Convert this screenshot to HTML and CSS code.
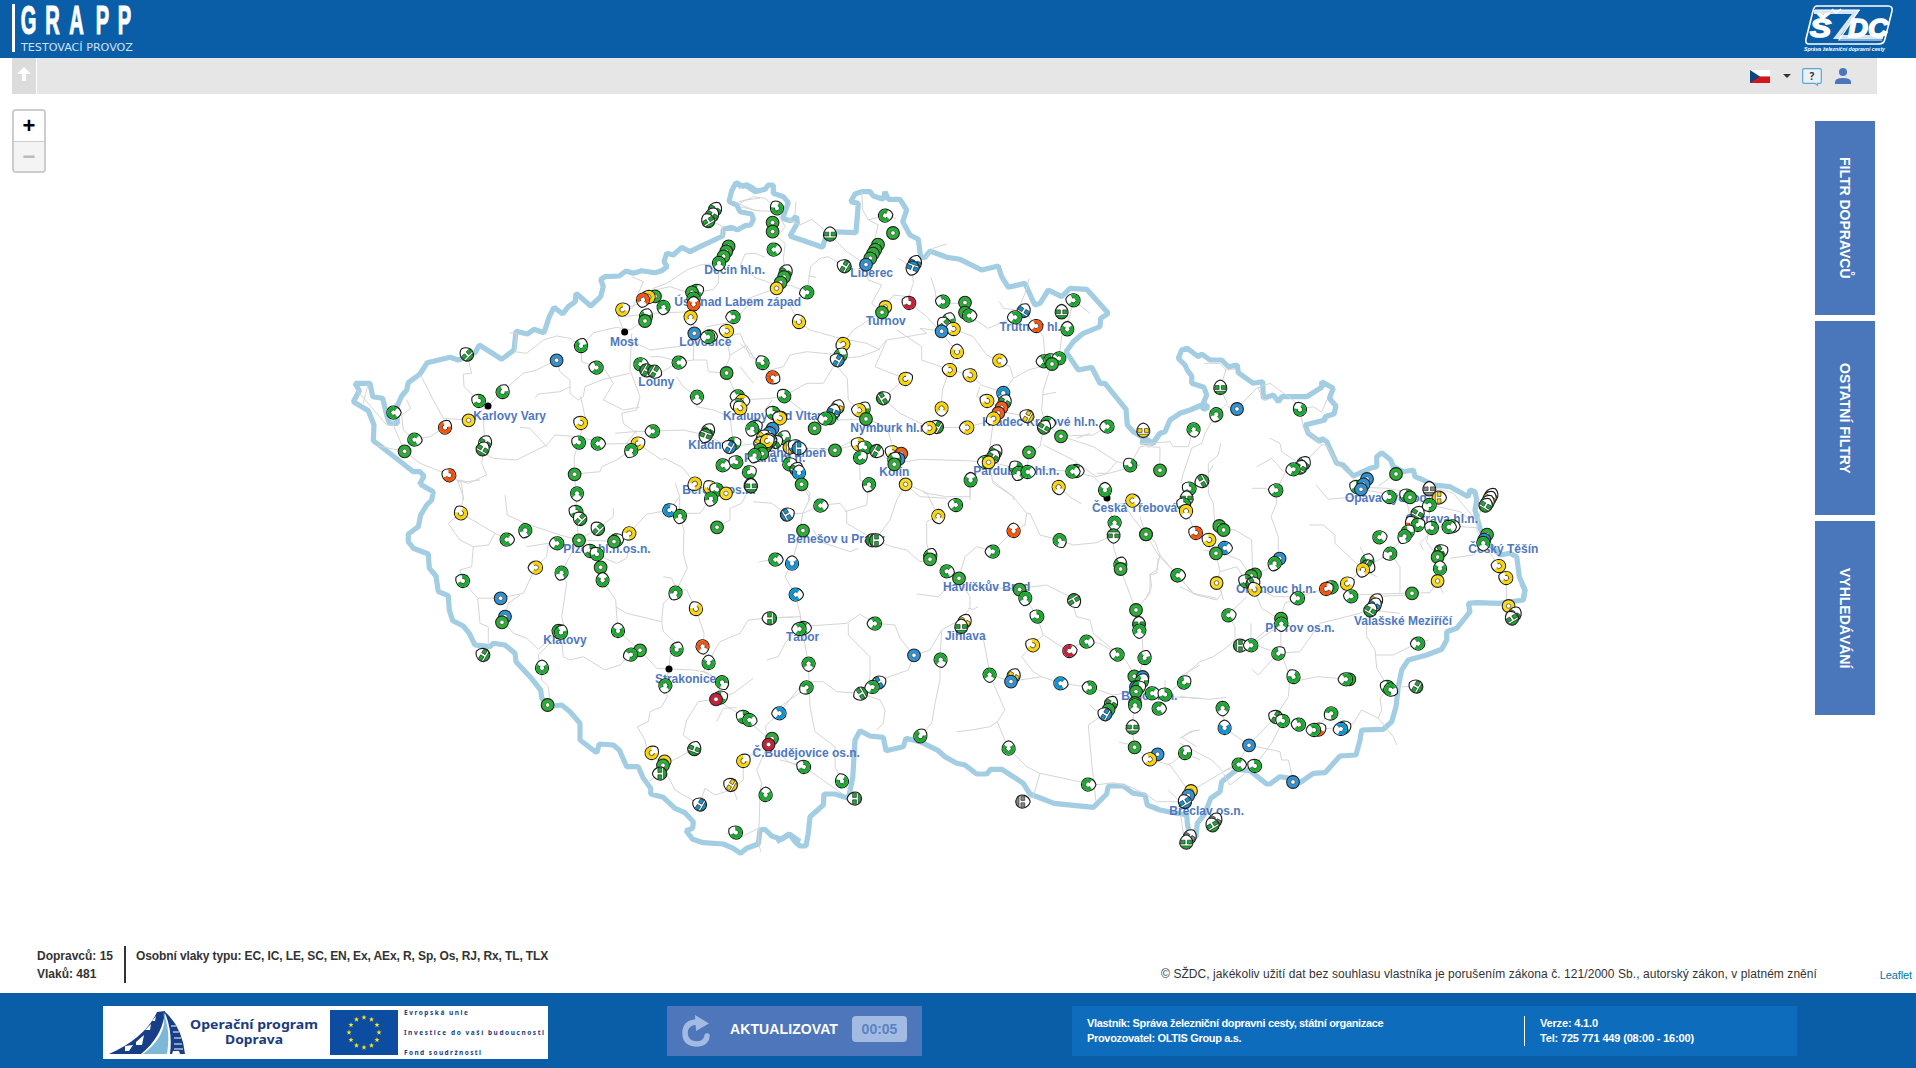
FILE: index.html
```html
<!DOCTYPE html>
<html lang="cs">
<head>
<meta charset="utf-8">
<title>GRAPP</title>
<link rel="stylesheet" href="styles.css">
</head>
<body>
<header class="header">
  <div class="brand">
    <svg class="brand-name" width="124" height="48" viewBox="0 0 124 48">
      <text class="brand-title" transform="translate(0 30) scale(.49 1)" x="18 68 117 171 216">GRAPP</text>
      <text class="brand-sub" x="9" y="47" textLength="112" lengthAdjust="spacingAndGlyphs">TESTOVACÍ PROVOZ</text>
    </svg>
  </div>
  <svg class="szdc" width="92" height="50" viewBox="0 0 92 50">
    <path class="szdc-frame" d="M14 2H85Q90 2 89 7L82 35Q81 40 76 40H6Q2 40 3 35L10 7Q11 2 14 2Z"/>
    <path class="szdc-band" d="M11 8H53L34 33H80"/>
    <path class="szdc-line" d="M12 6H56L36 36H79"/>
    <text class="szdc-text" x="7" y="33" textLength="21" lengthAdjust="spacingAndGlyphs">Š</text>
    <text class="szdc-text" x="45" y="33" textLength="40" lengthAdjust="spacingAndGlyphs">DC</text>
    <path class="szdc-line" d="M29 5l4 4 5-4"/>
    <text class="szdc-sub" x="1" y="47" textLength="81" lengthAdjust="spacingAndGlyphs">Správa železniční dopravní cesty</text>
  </svg>
</header>
<main class="main">
  <svg class="map" id="map" viewBox="0 58 1916 935"></svg>
  <div class="toolbar">
    <div class="collapse"><svg width="14" height="14" viewBox="0 0 14 14"><path d="M7 0L14 7H9V14H5V7H0Z" fill="#fff"/></svg></div>
    <div class="tools">
      <svg width="20" height="13" viewBox="0 0 20 13"><path fill="#fff" d="M0 0h20v6H0z"/><path fill="#d7141a" d="M0 6.500h20V13H0z"/><path fill="#11457e" d="M0 0l10 6.500L0 13z"/></svg>
      <svg class="caret" width="8" height="4" viewBox="0 0 8 4"><path fill="#333" d="M0 0h8L4 4z"/></svg>
      <svg class="help" width="20" height="18" viewBox="0 0 20 18"><path fill="#e9f1f6" stroke="#5ba5d8" stroke-width="1.200" d="M2 .7H18Q19.300.7 19.300 2V14Q19.300 15.300 18 15.300H15.500V17.300L13 15.300H2Q.7 15.300.7 14V2Q.7.7 2 .7Z"/><text class="help-text" x="10" y="11.500">?</text></svg>
      <svg class="user" width="16" height="16" viewBox="0 0 16 16"><g fill="#4a76bc"><circle cx="8" cy="4" r="4"/><path d="M0 16V14Q0 10 8 10T16 14V16Z"/></g></svg>
    </div>
  </div>
  <div class="stage">
    <div class="zoom"><span class="zoom-btn">+</span><span class="zoom-btn zoom-off">−</span></div>
    <nav class="tabs">
      <div class="tab"><span>FILTR DOPRAVCŮ</span></div>
      <div class="tab"><span>OSTATNÍ FILTRY</span></div>
      <div class="tab"><span>VYHLEDÁVÁNÍ</span></div>
    </nav>
  </div>
  <div class="status">
    <div class="counts"><div>Dopravců: 15</div><div>Vlaků: 481</div></div>
    <div class="types">Osobní vlaky typu: EC, IC, LE, SC, EN, Ex, AEx, R, Sp, Os, RJ, Rx, TL, TLX</div>
    <div class="copy">© SŽDC, jakékoliv užití dat bez souhlasu vlastníka je porušením zákona č. 121/2000 Sb., autorský zákon, v platném znění</div>
    <div class="leaflet">Leaflet</div>
  </div>
</main>
<footer class="footer">
  <svg class="fund" width="445" height="53" viewBox="0 0 445 53">
    <path fill="#fff" d="M0 0h445v53H0z"/>
    <path fill="#173f87" d="M6 48Q42 32 54 6L62 5Q60 30 38 48Z"/>
    <path fill="#fff" d="M22 40l8-1-4 6h-4zM33 36l8-7-2 10h-6zM42 24l6-6-1 6zM49 15l4-5-1 5z"/>
    <path fill="#7db8d6" d="M40 48Q66 28 60 6Q68 24 64 48Z"/>
    <path fill="#173f87" d="M61 5Q79 20 82 48H77L76 45H70L69 48H67Q70 24 61 5Z"/>
    <path stroke="#fff" stroke-width="1.200" d="M68 20h5M70 26h6M71 32h7M71 38h8M71 43h9"/>
    <g class="fund-name"><text x="87" y="23" textLength="128" lengthAdjust="spacingAndGlyphs">Operační program</text><text x="122" y="38" textLength="58" lengthAdjust="spacingAndGlyphs">Doprava</text></g>
    <path fill="#0c4da2" d="M227 4h68v45h-68z"/>
    <g id="stars" fill="#ffe617"></g>
    <g class="fund-small"><text x="301" y="9" textLength="64">Evropská unie</text><text x="301" y="28.500" textLength="140">Investice do vaší budoucnosti</text><text x="301" y="48.500" textLength="77">Fond soudržnosti</text></g>
  </svg>
  <div class="refresh">
    <svg width="28" height="32" viewBox="0 0 28 32"><path d="M14 7Q3 8 3 18T14 29Q24 29 25 21" fill="none" stroke="#a3bbe2" stroke-width="5.500" stroke-linecap="round"/><path fill="#a3bbe2" d="M13 0L27 8.500L14 16Z"/></svg>
    <span class="refresh-label">AKTUALIZOVAT</span>
    <span class="refresh-time">00:05</span>
  </div>
  <div class="info">
    <div class="info-main"><div>Vlastník: Správa železniční dopravni cesty, státní organizace</div><div>Provozovatel: OLTIS Group a.s.</div></div>
    <div class="info-side"><div>Verze: 4.1.0</div><div>Tel: 725 771 449 (08:00 - 16:00)</div></div>
  </div>
</footer>
<script src="map.js"></script>
</body>
</html>
```
FILE: styles.css
```css
* { box-sizing: border-box; }
body { margin: 0; width: 1916px; height: 1068px; display: flex; flex-direction: column; overflow: hidden; background: #fff; font-family: "Liberation Sans", Arial, sans-serif; }
svg { display: block; flex: none; overflow: visible; }

.header { height: 58px; flex: none; background: #0a5ea8; display: flex; justify-content: space-between; padding: 4px 21px 0 12px; }
.brand { height: 48px; border-left: 3px solid #fff; }
.brand-name { margin-left: -3px; }
.brand-title { font-size: 41px; font-weight: 700; fill: #fff; stroke: #fff; stroke-width: 1.200; }
.brand-sub { font: 11px "DejaVu Sans", sans-serif; fill: #cfe0f0; }
.szdc-frame { fill: none; stroke: #fff; stroke-width: 1.600; }
.szdc-band { fill: none; stroke: #d8e4ef; stroke-width: 4; }
.szdc-line { fill: none; stroke: #fff; stroke-width: 1.200; }
.szdc-text { font-size: 25px; font-weight: 700; font-style: italic; fill: #fff; stroke: #fff; stroke-width: 1.500; }
.szdc-sub { font-size: 6px; font-weight: 700; font-style: italic; fill: #fff; }

.main { position: relative; flex: 1; display: flex; flex-direction: column; }
.map { position: absolute; inset: 0; width: 1916px; height: 935px; }
.toolbar { position: relative; flex: none; width: 1865px; height: 36px; margin-left: 12px; background: #e6e6e6; display: flex; justify-content: space-between; }
.collapse { width: 25px; background: #dcdcdc; border-right: 1px solid #fff; padding: 9px 0 0 5px; }
.tools { display: flex; padding: 10px 26px 0 0; }
.tools > svg:first-child { margin-top: 2px; }
.caret { margin: 6px 11px 0 13px; }
.help-text { font: 700 10px "Noto Sans", sans-serif; fill: #333; text-anchor: middle; }
.user { margin-left: 13px; }

.stage { position: relative; flex: 1; display: flex; justify-content: space-between; align-items: flex-start; padding: 15px 41px 0 12px; }
.zoom { width: 34px; border: 2px solid #ccc; border-radius: 4px; overflow: hidden; }
.zoom-btn { display: block; height: 30px; background: #fff; font: 700 22px/30px "Liberation Sans", sans-serif; text-align: center; color: #000; }
.zoom-off { border-top: 1px solid #ccc; background: #f4f4f4; color: #bbb; }
.tabs { display: flex; flex-direction: column; gap: 6px; padding-top: 12px; }
.tab { width: 60px; height: 194px; background: #4a76bc; display: flex; align-items: center; justify-content: center; }
.tab span { writing-mode: vertical-rl; color: #fff; font-size: 14px; font-weight: 700; }

.status { position: relative; height: 47px; flex: none; display: flex; color: #333; font-size: 12px; line-height: 18px; }
.counts { width: 126px; height: 37px; padding: 1px 0 0 37px; border-right: 2px solid #333; font-weight: 700; white-space: nowrap; }
.types { padding: 1px 0 0 10px; font-weight: 700; letter-spacing: -.11px; }
.copy { margin: 19px 0 0 auto; letter-spacing: .062px; }
.leaflet { width: 99px; padding: 20px 4px 0 0; text-align: right; font-size: 11px; letter-spacing: -.1px; color: #0078a8; }

.footer { height: 75px; flex: none; background: #0a5ea8; display: flex; align-items: flex-start; padding: 13px 0 0 103px; }
.fund-name { font: 700 12.500px "Noto Sans", sans-serif; fill: #1b3b80; }
.fund-small { font: 700 6.500px "Noto Sans", sans-serif; fill: #1b3b80; }
.refresh { width: 255px; height: 50px; margin-left: 119px; background: #4d76bb; display: flex; align-items: center; padding: 0 0 4px 15px; }
.refresh svg { margin-top: 4px; }
.refresh-label { width: 108px; margin-left: 20px; color: #fff; font-size: 14px; font-weight: 700; white-space: nowrap; letter-spacing: .1px; }
.refresh-time { width: 55px; height: 26px; margin-left: 14px; border-radius: 4px; background: #a3bbe2; color: #5a82c4; font: 700 14px/26px "Liberation Sans", sans-serif; text-align: center; }
.info { width: 725px; height: 50px; margin-left: 150px; background: #0e6cbd; display: flex; padding: 10px 0 0 15px; color: #fff; font-size: 11px; font-weight: 700; line-height: 15px; }
.info-main { width: 438px; height: 30px; border-right: 1px solid #fff; letter-spacing: -.33px; }
.info-side { padding-left: 15px; letter-spacing: -.17px; }

.border { fill: none; stroke: #a2cde2; stroke-width: 5.200; stroke-linejoin: bevel; }
.rail { fill: none; stroke: #d5d5d5; stroke-width: 1; }
.city { font-size: 12px; font-weight: 700; fill: #4f78c0; }
.drop { fill: #fff; stroke: #1a1a1a; stroke-width: 3.200; }
.body { stroke: #222; stroke-width: 3; }
.hub { fill: #fff; stroke: #444; stroke-width: 2; }
.arc { fill: none; stroke-width: 10; }
.arc-in { fill: none; stroke: #1a1a1a; stroke-width: 2; }
.bars { stroke: #222; stroke-width: 1.800; }
.g { fill: #2bb035; } .y { fill: #fbdb20; } .b { fill: #2f94d5; } .o { fill: #f95c1c; } .r { fill: #cd2038; } .k { fill: #888; }
.bars.g { fill: #16ae2e; } .bars.y { fill: #fbd500; } .bars.b { fill: #0a98dc; }
.arc.g { stroke: #16ae2e; fill: none; } .arc.y { stroke: #fbd500; fill: none; } .arc.b { stroke: #0a98dc; fill: none; } .arc.o { stroke: #fb5406; fill: none; } .arc.r { stroke: #cd2038; fill: none; }
```
FILE: map.js
```js
// The network is stored in six tiles; coordinates inside a tile are in thirds
// of a pixel from its origin. Markers: kind (s stop, c moving, h halted) + colour, x, y, heading.
const tiles = [
{ x: 340, y: 170,
  border: "1260,62 1248,62 1235,52 1220,44 1208,48 1188,38 1175,62 1167,95 1190,105 1200,125 1235,132 1240,148 1232,165 1215,167 1192,180 1175,172 1150,178 1148,198 1080,230 1050,245 1025,232 1000,255 980,250 972,275 982,290 965,302 945,308 905,302 880,310 858,303 838,318 795,320 782,328 790,350 782,380 752,408 708,370 706,395 685,410 668,432 642,412 628,440 612,488 582,478 562,492 528,484 522,540 485,568 450,545 418,525 405,548 378,562 355,570 330,562 262,578 240,612 205,638 200,660 185,678 170,712 172,760 148,760 140,735 128,685 98,680 90,640 45,640 58,662 40,695 85,722 102,765 100,812 130,835 220,905 240,905 252,918 238,945",
  rails: ["1148,198 1148,170 1110,150","1260,85 1215,90 1190,98 1240,120 1260,122","1136,280 1080,285 1040,300 980,340 940,355 900,400 870,410","875,320 910,335 895,370 880,410 835,440 850,480","1136,280 1135,340 1120,358 1060,370 1060,440 1062,489","850,440 940,430 1050,425 1060,440","725,530 760,488 830,472 870,480 900,460 917,440","944,360 990,350 1050,370","875,490 870,600 900,680 890,720 845,730 850,760 890,790","868,510 930,540 1010,530 1065,520 1100,470 1180,455 1220,410 1260,390","1062,489 1060,570 1100,570 1105,605 1150,608 1170,560 1160,500 1200,490 1230,560 1250,570","1060,570 1015,577 960,610 900,580","1170,555 1220,525 1240,560","722,527 725,575 795,600 820,640 790,690 850,720 898,712","649,570 660,605 690,630 690,670 715,690 730,680 735,650 790,628 870,610","510,488 530,490 525,545 560,550 610,510 650,498 690,505 722,527","649,570 590,600 550,610 487,665 444,708 385,750 310,745 280,690 240,612","385,570 395,610 370,612 372,650 416,692 444,708","585,685 595,672 660,665 690,650","314,772 270,800 222,808 193,843 160,765 165,700","50,660 140,765 160,765","70,700 85,640","200,690 212,715 185,735 190,780 222,808","193,843 110,828","193,843 240,880 327,915 365,940 370,990","430,740 434,818 425,880 440,915 385,940 350,930","430,850 460,865 530,870 560,855 620,825 645,795 716,800 800,822 892,820 965,870 975,865 1030,895 1064,940","540,772 570,775 620,830","722,680 735,740 716,817 703,860 703,912 710,990","703,912 780,905 785,890 830,870 873,840","938,783 1030,780 1096,795 1170,830 1250,820","890,780 860,820","1070,679 1070,710 1120,720 1170,740 1180,820","1070,679 1030,650 1010,620","825,790 880,785 938,783","1159,608 1190,678","930,560 960,560 1000,570"],
  dots: "854,486 444,708",
  cities: [[811,527,"Most"],[401,749,"Karlovy Vary"],[1094,311,"Děčín hl.n."],[1004,407,"Ústí nad Labem západ"],[1019,527,"Lovosice"],[896,647,"Louny"],[1150,749,"Kralupy nad Vltavou"],[1046,836,"Kladno"]],
  trains: "hg 1124 118 30,hg 1115 135 30,hg 1104 152 -30,sg 1165 228,sg 1158 243,sg 1150 258,cg 1136 278 180,cg 1068 362 60,sg 1055 366,cg 1060 385 180,co 1060 402,cy 846 418 60,sg 944 378,cy 925 380 -90,co 908 388 190,cg 970 410 190,cg 917 438 20,sg 914 452,cy 1051 440 180,cg 1180 440 -90,cy 1108 498 90,cg 1104 500 -90,cy 1160 482 -80,sb 1062 489,cg 722 527 20,sb 649 570,cg 769 592 -80,cg 900 582 80,hg 918 600 120,hg 942 604 120,cg 1015 577 90,sg 1159 608,cg 1070 679 180,hg 380 553 -45,cg 416 692 -60,cg 487 665 30,cg 159 727 90,co 314 772 30,sy 385 750,cg 222 808 100,sg 193 843,co 327 915 -60,hg 434 818 30,hg 427 837 30,cy 722 758 -60,cg 716 817 -60,cg 772 820 90,cy 892 820 60,cg 873 840 210,cg 938 783 -90,hg 1103 782 30,hg 1096 795 200,sg 703 912,cg 1193 678 -90,cy 1205 692 90,cg 1193 705 -80,cy 1200 714 -40,cg 1180 820 60,hb 1168 830 -60,cg 1147 885 90,cg 1188 876 -60" },
{ x: 740, y: 170,
  border: "-5,48 20,48 45,65 75,58 85,45 100,45 100,70 130,80 145,98 128,145 150,152 170,140 172,160 150,198 248,232 262,185 348,188 355,100 332,95 345,72 365,65 390,65 400,78 430,88 435,65 445,88 480,88 500,120 488,155 510,195 535,208 542,262 555,262 570,243 620,262 660,268 725,300 775,288 785,320 805,352 855,340 875,385 885,405 900,400 925,360 965,380 990,355 1040,358 1105,430 1082,445 1080,470 1030,490 1000,515 978,545 1015,600 1055,592 1080,640 1095,640 1158,718 1162,765 1180,785 1240,820 1260,790",
  rails: ["0,100 40,80 75,85 110,114","0,110 50,122 110,125 136,170 110,200 136,220 130,265 136,305 120,300 110,354 0,395","145,150 180,165 215,148 269,193 320,245 377,283","168,95 165,130 145,155","365,65 368,120 385,150 434,136 468,145","385,150 415,165 398,230","75,262 45,250 15,252 0,290 50,325 110,345","110,354 150,345 201,366 212,290 240,265 265,260 313,288","205,318 228,322","140,390 176,455 210,480 300,505 380,520 420,540","377,283 385,330 425,345 395,400 425,426 340,480 309,521 301,555 200,545 150,555 130,590 90,600 67,578","435,410 460,375 507,380 520,340 517,292 475,265","507,398 560,440 600,483 650,545 629,599 607,660 604,714","572,322 585,360 590,400 674,400 674,430 745,475 825,441 855,370 868,325","778,395 790,415 825,420","555,265 580,235 620,222","600,483 540,475 560,490 500,500 440,510 415,540 360,560 301,565","440,510 405,590 495,626 428,684","470,480 545,530 545,570 629,599 690,615 725,645 790,668","720,650 710,680 741,692 784,712","640,476 700,500 740,555 810,590 820,625 790,668 784,720 760,750 745,876","820,625 865,600 935,581 957,564 965,500 980,475 1000,390 1050,430","850,422 888,467 910,500 915,560 935,581 910,660 905,720 915,760 962,798 1060,795 1102,769","905,675 948,667","780,725 861,738 911,772 900,830 866,846 862,905","910,825 1000,870 1068,920 1200,885","428,684 480,730 568,773 681,772 760,750","292,590 322,625 325,690 357,720 377,746 360,800 284,840 170,832","0,690 90,685 132,678 200,640 250,640 292,570","0,520 40,560 67,578 97,621","132,678 223,750 223,774","230,770 300,750 377,746 440,770 455,820","284,840 355,822 408,842 462,882 496,942 540,980 620,985","462,882 540,868 680,872 745,876 828,893 996,904 1060,920 1100,960","745,876 691,930 690,990","745,876 760,940 820,980 820,990","962,798 1060,830 1130,875 1100,910 1070,910","1010,805 1050,790","1130,875 1170,885 1200,830 1240,822","359,862 360,930 386,942","140,860 176,908 184,942 210,970 205,990","97,690 60,740 36,775","0,590 40,640"],
  dots: "1101,984",
  cities: [[332,320,"Liberec"],[379,464,"Turnov"],[780,482,"Trutnov hl.n."],[728,767,"Hradec Králové hl.n."],[332,785,"Nymburk hl.n."],[419,919,"Kolín"],[701,914,"Pardubice hl.n."],[13,876,"Praha hl.n."],[52,860,"Praha-Libeň"]],
  trains: "cg 110 114 -30,sg 97 157,sg 97 184,cg 100 238 90,hg 136 305 30,sg 131 320,sg 121 337,sy 109 354,cg 201 366 -100,cy 176 455 -20,hg 269 193,hg 313 288 -60,sg 413 223,sg 405 238,sg 398 250,sg 390 264,sb 377 283,cg 434 136 80,sg 458 188,hb 524 278 20,hb 517 292 200,sy 435 410,sg 425 426,cr 507 398 -60,cg 609 394 -80,sg 674 397,sg 674 427,cg 686 436 90,cy 309 521 -120,cg 301 555 30,hb 292 570 -60,cg 67 578 -30,co 97 621 120,cg 132 678 -45,cg 625 450 20,hg 612 462 -40,cy 640 476 -80,sb 604 483,cy 650 545,cy 629 599 -80,cy 690 615 -60,cy 777 571 100,cy 495 626 60,hg 428 684 60,cy 604 714 180,hy 292 711 20,hb 280 725 20,sg 268 744,cg 256 745 -100,sg 223 774,cg 370 717 30,cy 357 720 -80,sg 377 746,hb 850 422 30,cg 825 441 -90,co 888 467 -80,cg 1000 390 -80,hg 964 426,cg 981 477,cg 911 573 -90,cg 930 570 60,cg 957 564 -100,sg 935 581,cb 789 668 180,hg 793 695 30,so 784 712,so 774 728,cy 760 745 -120,cy 741 692 -60,hy 861 738 -60,cg 922 758 90,hg 911 772 30,sg 962 798,cg 1102 769 -90,hy 1209 782,hg 590 770 -60,cy 568 773 -90,cy 681 772 -90,sg 284 840,cy 355 822 -60,cg 375 832 -60,hg 408 842 120,cg 359 862 60,cy 457 846 -60,so 483 850,sb 475 866,cg 462 868 20,sg 462 882,hg 765 845 30,hg 758 860 30,cg 735 875 -90,sy 745 876,sg 866 846,cg 828 893 -40,cg 835 908 200,cg 862 905 90,cg 1008 902 90,cg 996 904 90,cg 1170 885 -40,cg 691 930,cg 386 942 200,sy 496 942,cy 955 950 170,cg 1094 960,cg 99 728 -60,cg 117 742 60,cy 119 744 -60,sb 97 775,sb 88 788,cb 44 770 60,cg 36 775 200,cg 130 803 30,hy 68 800 40,hg 105 815 60,hg 90 810 -30,hy 60 820 30,hg 75 828 30,cy 80 812 60,cg 60 840 200,sg 66 850,cg 43 855 200,hy 148 832 90,cb 166 828 -60,hb 175 834 90,cg 147 882 60,hg 168 898 30,cb 176 908,sg 184 942,cg 26 906 60,hg 31 946" },
{ x: 1140, y: 270,
  border: "0,515 38,520 60,490 75,485 90,450 120,430 150,420 185,405 190,418 205,412 190,400 200,375 192,352 155,340 155,318 142,300 135,285 115,265 125,240 142,235 175,260 185,252 210,270 245,270 265,290 292,285 295,308 340,340 368,335 370,385 400,375 415,395 425,380 500,380 545,352 545,335 580,355 568,385 588,408 582,432 555,440 555,450 495,465 505,490 540,515 545,505 560,515 590,580 610,585 640,618 690,595 710,590 710,560 725,548 752,570 760,590 790,605 820,600 825,620 850,630 880,645 930,650 985,680 990,660 1005,665 1010,690 1005,720 1020,775 1040,815 1080,855 1110,850 1130,860 1138,920 1155,960 1150,990",
  rails: ["193,280 240,280 258,300 285,297","258,300 240,353 262,400 228,432 195,490 185,520 155,535 130,610 122,640","262,410 290,416 350,355 390,340 460,390 479,418 490,470 545,525 485,585 440,600 408,660 410,700 393,740 415,800 415,850 400,890 340,915","355,355 370,388 385,390","479,418 520,410 545,427 560,390","160,477 145,530 120,530 100,530 90,515 0,522","20,530 60,532 59,600","390,505 420,520 425,545 470,575","350,590 395,565 430,605","335,655 375,655 405,670","545,525 560,525 590,580 640,625 662,657 740,672 800,676 868,704 960,725 990,750","528,645 565,688 650,680","662,652 740,655 800,665","715,648 767,611","242,520 235,555 205,580 205,610 220,585","205,610 205,670 220,700 225,770 285,780 335,810 338,915","130,640 139,685 140,725 165,785 207,809 227,849 240,905 229,938","190,840 250,850 300,870 320,900","0,740 17,792 45,815 60,855 111,915 160,970 230,985","60,855 50,900 30,912 35,950 15,990","240,905 290,890 317,933","508,765 550,765 585,795 585,820 668,898 710,920","340,950 403,980 473,980 557,956 620,940 668,898 750,850 793,798 832,764 875,773 928,768 1010,773","660,830 680,870","750,850 780,890 780,970","870,700 866,780 860,815 892,860 899,895 892,932 910,970","930,865 1000,855 1030,820 1010,780 1025,700","633,975 815,969 870,968 892,932","1030,820 1076,887 1098,923 1100,990","890,655 940,670 1000,740","800,690 810,740 832,764","850,840 840,820 870,790","240,950 250,990"],
  dots: "",
  cities: [[616,695,"Opava východ"],[797,760,"Ostrava hl.n."],[986,848,"Český Těšín"],[289,968,"Olomouc hl.n."]],
  trains: "hg 240 353,sb 290 416,cg 228 432 200,cg 479 418 -30,cg 160 477 170,sg 59 600,hg 186 632 -120,cg 148 655 -60,hg 139 685,cg 131 703 -60,cy 137 722 180,co 167 788 -60,cy 207 809 -60,sg 237 767,sg 250 779,cb 253 833 90,sg 227 849,sg 17 792,cg 111 915 90,sy 229 938,hg 490 580 40,hg 480 592 30,cg 460 597 -100,cg 408 660 -80,sb 418 865,cg 403 879 200,sg 767 611,cg 650 650 -60,sb 680 626,sb 670 642,sb 662 657,cg 748 680 -80,cg 800 676 -60,sg 809 681,hk 867 657,hy 895 682 90,cg 868 704 -120,hg 832 730 30,co 815 760 -30,cg 832 764 60,cg 875 773 -60,cg 936 768 90,cg 925 770 90,cg 717 801 80,cg 802 785 40,cg 793 798 210,cg 750 850 -120,hk 1053 676 30,hy 1048 685 30,hg 1042 697 30,hg 1036 706 30,sg 1040 793,sb 1032 808,cg 1029 818 180,cy 1076 887 -80,cy 1098 923 -70,hg 901 843 60,sg 892 860,cg 899 895,sy 892 932,sg 815 969,cg 681 873 20,hg 682 888 120,cy 668 898 200,cy 620 940 60,cg 574 951 -60,co 557 956 60,cg 633 978 -80,sg 344 912,sg 333 917,cg 317 933 -60,hg 337 940 60,cy 343 958 -30" },
{ x: 380, y: 480,
  border: "120,12 160,35 155,60 140,75 122,105 115,140 85,162 85,185 100,205 145,222 148,265 168,288 175,335 205,347 208,390 218,422 250,438 268,460 285,495 330,500 340,490 375,495 405,520 408,545 450,590 482,630 485,655 515,678 545,675 570,695 600,730 600,780 650,818 658,792 700,795 718,810 740,860 775,860 790,895 812,925 812,942 850,952 885,985 915,998 940,1025 938,1045 918,1052 938,1078 970,1088 1030,1092 1060,1105 1082,1120 1100,1105 1135,1092 1140,1050 1155,1048 1175,1068 1205,1078 1228,1062 1260,1085",
  rails: ["232,0 250,50 242,99 345,160 380,178","300,0 260,5 235,0","375,45 382,105 435,130 540,165 596,180","242,99 205,130 225,160 240,180 280,200 325,195 345,160","280,200 275,260 240,270 248,302 293,355 361,354 430,340 467,262 500,230 505,190 440,200","293,355 300,430 325,440 325,500","420,345 385,370 374,409 361,410 400,460 440,475 475,508 495,490 535,452","590,39 588,95 596,180 544,277 560,310 545,410 550,430 542,457 475,525 485,600 505,620 510,665","596,180 653,146 700,110 700,85","596,180 701,184 747,159 800,103 867,90 899,50","640,215 661,261 667,300 707,360 713,452 779,510 830,565 867,567 940,570 980,577 1025,606","650,225 710,250 740,235 745,210","707,380 740,400 845,425","542,457 550,530 570,540 610,530 675,570 720,555 752,523","886,10 899,50 899,107 912,150 910,220 922,265 886,337 850,370 845,425 850,455 889,490 870,530 867,567 855,615 862,650 845,680 810,695 805,725 772,740 795,780 800,810 848,855","850,290 875,295 890,330 920,330 947,386 972,460 970,500 985,548 970,575 1000,590","1025,606 1007,657 955,665 920,720 910,765 942,790 942,806 900,830 848,855 840,880 805,905","850,860 885,930 959,973 975,925 1005,945 1052,930 1090,900 1089,842 1165,793","1007,657 1090,710 1165,775 1165,793 1130,870 1145,910 1140,940 1138,1020 1135,1090 1143,1115","985,548 1010,500 1020,485 1080,460 1105,420 1169,414 1240,412","1007,657 1060,640 1120,595","1010,725 1030,685 1070,683","1160,540 1195,530 1215,490 1255,440","1175,800 1225,845 1260,860","1165,775 1155,740 1198,699 1260,620","1010,141 1050,120 1050,85 1085,70 1112,18","1120,65 1175,70 1221,103 1260,100","1135,1045 1085,1070 1040,1060","899,100 960,100 992,55 1037,39","1072,960 1060,930","1137,245 1185,238"],
  dots: "867,567",
  cities: [[908,43,"Beroun os.n."],[1119,830,"Č.Budějovice os.n."],[491,491,"Klatovy"],[826,608,"Strakonice"],[551,218,"Plzeň hl.n.os.n."]],
  trains: "cg 590 39 180,cy 944 10 -130,cy 990 22 -40,cg 1010 28 -60,sy 1037 39,cg 992 55 200,hg 1112 18,cy 242 99 -30,cg 588 95 -60,hg 600 116 -45,cg 435 150 200,cg 379 178 90,sg 596 180,hg 653 146 -45,cg 708 180 60,sg 701 184,cy 747 159 -130,cg 531 189 -90,cg 630 212 -60,cg 650 222 -45,sg 661 261,cg 667 300,cg 544 277 200,cy 467 262 -90,cg 248 302 -60,sb 361 354,sb 374 409,sg 365 426,hg 309 524 -60,cg 485 563,sg 502 674,cg 535 452 180,cg 542 457 20,cg 713 452,sg 779 510,cg 752 523 -110,cg 889 508 20,co 967 498 170,cg 985 548,cg 855 615 190,cg 1025 606 150,cg 1020 652 60,sr 1007 657,cg 1090 710 -60,cg 1107 719 100,sg 1175 775,sr 1165 793,cb 1198 699 -90,cy 814 818 45,sy 853 843,sg 848 855,hg 840 880 -90,hg 942 806 20,cy 1089 842 45,hy 1052 914 -60,hb 959 973 -60,cg 1156 944,cg 1067 1057 -60,cb 867 90 60,cg 899 107 190,sg 1010 141,cg 886 337 -150,cy 947 386 -30,hg 1169 414 -90,cg 1185 238 90" },
{ x: 780, y: 480,
  border: "-10,1085 28,1062 45,1085 60,1098 78,1098 85,1060 90,1010 130,975 132,942 165,942 205,955 218,895 225,780 240,752 270,768 310,772 318,812 370,800 378,775 420,785 475,812 495,830 530,850 555,855 590,882 620,882 632,868 665,868 700,890 730,910 750,942 822,970 940,982 980,942 985,918 1030,918 1060,940 1095,945 1102,975 1140,990 1190,1000 1225,1005",
  rails: ["65,12 90,55 68,100 55,180 35,250 15,290 46,343 60,400 65,440 85,550 90,680 105,755 165,800 165,860 185,903 220,950","0,103 70,100 120,76 180,70 200,95 200,130 285,180 335,200 380,210 420,245 450,240","100,150 120,185 210,215 235,205","266,12 260,75 195,95","377,12 350,60 330,120 285,180","377,12 440,38 474,107 440,125 440,190 450,227 499,273 536,294 570,350 570,385 540,420 485,450 480,540 480,600 465,670 455,730 420,768","410,342 475,350 500,325 540,305","536,294 555,230 590,200 638,214 700,152 735,135 740,100 700,50 635,0","430,38 500,50 570,50 570,5","740,100 750,100 780,165 838,180 880,195 950,188 1000,165","570,310 600,325 720,325 800,315 870,350 890,410 930,420 940,460 1000,510 1040,545 1064,588","718,328 771,409 790,465 860,510 918,484 960,490 1012,523","790,465 725,530 760,575 785,590","628,583 692,604 785,590 840,609 929,622 1000,645 1067,634","60,440 200,430 240,403 284,430 345,435 360,475 401,525 450,510 485,450","205,430 205,465 270,530 270,590 260,630","401,525 385,570 300,600 242,640 300,660 315,690 310,730 290,750","85,605 130,605 170,635 242,640","85,620 0,680","610,475 625,555 628,583 675,690 652,725 685,805 740,860 780,880 945,915 1000,908 1050,920 1100,945 1130,965 1200,965","780,880 760,950 726,964","530,755 575,750 630,740 652,725","1003,127 1000,200 1021,266 1067,389 1085,450 1090,533 1067,634 1064,675 1057,742 1063,801 1109,837 1170,855 1220,925","1135,235 1130,280 1110,285 1110,340 1067,389","980,55 1000,127","1000,75 1030,70 1056,110 1097,162 1135,225 1192,285 1245,345","1067,634 1155,643 1209,607 1225,575 1260,555","1067,634 1115,639 1165,650 1260,655","930,675 945,690 975,700 925,735 935,850 948,965","1160,855 1175,850 1213,818 1260,840","565,385 580,388 595,380","1200,990 1210,1060","0,412 60,410 65,440","834,20 870,50 905,72","0,840 40,850 71,860 185,940","1260,750 1230,755 1205,772 1250,800","1155,600 1155,640","1017,787 1060,795","1165,930 1200,965"],
  dots: "",
  cities: [[937,96,"Česká Třebová"],[23,188,"Benešov u Prahy"],[490,332,"Havlíčkův Brod"],[19,482,"Tábor"],[496,479,"Jihlava"],[1025,660,"Brno hl.n."],[1169,1004,"Břeclav os.n."]],
  trains: "cg 120 76 90,hb 20 103 60,sg 68 151,hg 276 180 90,hg 287 180 90,cb 35 250,cb 46 343 90,cg 70 443 90,cg 58 446 -90,cg 284 430 -90,sb 401 525,cg 85 550 180,cg 79 621 -130,cg 420 768 30,hg 242 640 -120,hb 295 607 60,cg 277 620 -100,cg 450 227 20,sg 449 237,cg 499 273 100,sg 536 294,cy 474 107 170,cg 527 74 -80,co 700 152,cg 838 180 150,cg 638 214 -90,hy 553 424 30,hg 543 440,cg 481 538 170,sg 718 328,cg 735 353 190,cg 771 409 -60,hg 881 360 150,cy 758 495 -60,cr 867 512 80,cg 918 484 100,cg 1012 523 -80,cg 628 583 180,hy 700 587 30,sb 692 604,cb 840 609 100,cg 929 622 -80,cg 685 805,cg 71 860 -60,cg 185 903 -20,hg 224 955 -90,hk 726 964 90,cg 923 913 90,cg 1003 127 180,hg 1000 165 180,sg 1097 162,cy 1056 61 90,cg 1020 253 20,sg 1021 266,cg 1192 285 90,sg 1067 389,hg 1076 432,cg 1077 451 180,cg 1093 533 20,sg 1062 588,sb 1087 590,cg 1085 602 30,sb 1067 620,cg 1074 622 60,sg 1067 634,cg 1115 639 90,cg 1155 643 -60,sg 1064 668,cg 1064 675 180,cg 1135 685 90,hg 992 670 30,sg 985 688,hb 975 702 -60,hg 1057 742,sg 1063 801,sb 1132 822,cy 1109 837 -80" },
{ x: 1180, y: 480,
  border: "20,1000 22,1030 30,1075 48,1070 52,1030 75,1000 92,955 120,935 125,905 172,868 210,872 260,912 270,912 300,890 330,895 360,908 400,880 435,878 480,828 528,825 540,780 545,750 610,748 635,725 648,680 655,620 665,570 685,540 740,525 785,508 800,480 800,455 830,445 870,395 865,370 890,368 960,370 1030,360 1035,330 1025,310",
  rails: ["0,320 50,345 110,360 125,340 109,308","144,405 200,350","144,405 165,440 165,480 130,510 100,530 60,545 25,575 0,590","213,430 213,490 300,415 315,370 353,354","222,330 245,385 302,420 303,520 330,590 325,650 287,710 206,795 172,850 30,935","179,496 240,500 294,520 360,515 420,430 520,405 570,390 660,400","213,495 294,440","294,520 235,585 215,568","340,605 410,590 497,597","560,400 560,470 585,510 590,565 625,622 600,655 605,690 595,715 640,770 650,795","585,525 640,525 690,500 745,480","595,715 545,690 520,730 490,742 401,749 308,722 275,790 224,857 150,915 130,880","0,775 45,750","0,790 95,840 130,875 185,850","127,683 133,743 206,795 300,815 305,840 325,840 340,900","0,650 90,658 140,652","580,350 680,345","625,622 708,619","401,749 453,699"],
  dots: "",
  cities: [[257,455,"Přerov os.n."],[523,434,"Valašské Meziříčí"]],
  trains: "cg 353 354 -90,sy 985 377,hg 1003 402 30,hg 995 415 -30,hy 587 362 30,hb 583 375 30,hg 570 390 30,cg 144 405 80,sg 302 415,cg 303 430 180,hg 179 496 90,cg 213 495 -90,cg 294 520 45,cg 340 590 -30,cg 714 490 -90,cg 11 607 45,sg 507 597,cg 497 597 -90,cg 622 620 -60,cg 630 628 120,hg 708 619 -60,cg 127 683 180,cb 133 743,sb 206 795,cg 175 853 90,cg 224 857 -60,sb 338 905,hg 287 710 -60,cg 308 722 -60,cg 356 733 -80,co 415 748 60,cg 401 749 -90,cg 453 699 -130,cg 490 742 60,cb 482 746 -100,cg 14 818 30,sy 32 932,sb 24 946,hb 14 965 -30,hk 105 1020 30,hg 97 1035 -30,hk 28 1070 30,hg 18 1087" }
];

const drop = '<path class="drop" d="M-18 -6Q-13 -20 0 -23Q13 -20 18 -6A19 19 0 1 1 -18 -6Z"/>';
const shapes = {
  s: c => `<circle class="body ${c}" r="18.500"/><circle class="hub" r="6.500"/>`,
  c: c => `${drop}<path class="arc ${c}" d="M-9.500 -8.500A12.700 12.700 0 1 0 9.500 -8.500"/><path class="arc-in" d="M-5.500 -5.500A7.500 7.500 0 1 0 5.500 -5.500"/>`,
  h: c => `${drop}<path class="bars ${c}" d="M-15 -7H-3.500V4H-17ZM3.500 -7H15L17 4H3.500ZM-15 9.500H15Q9 18 0 18T-15 9.500Z"/>`
};
const px = (t, x, y) => [t.x + x / 3, t.y + y / 3];
const line = (t, pts) => pts.split(" ").map(p => px(t, ...p.split(",").map(Number)).map(n => n.toFixed(1)).join(",")).join(" ");
const layers = ["", "", "", ""];
for (const t of tiles) {
  layers[0] += `<polyline class="border" points="${line(t, t.border)}"/>`;
  for (const r of t.rails) layers[1] += `<polyline class="rail" points="${line(t, r)}"/>`;
  for (const [x, y, name] of t.cities) {
    const [a, b] = px(t, x, y);
    layers[2] += `<text class="city" x="${(a - 0.4).toFixed(1)}" y="${b.toFixed(1)}">${name}</text>`;
  }
  for (const d of t.dots.split(" ").filter(Boolean)) {
    const [a, b] = px(t, ...d.split(",").map(Number));
    layers[3] += `<circle cx="${a}" cy="${b}" r="3.500"/>`;
  }
  for (const m of t.trains.split(",")) {
    const [k, x, y, dir = 0] = m.split(" ");
    const [a, b] = px(t, +x, +y);
    layers[3] += `<g transform="translate(${(a + 0.3).toFixed(1)} ${(b + 0.3).toFixed(1)}) rotate(${dir}) scale(.345)">${shapes[k[0]](k[1])}</g>`;
  }
}
document.getElementById("map").innerHTML = layers.join("");

let stars = "";
for (let i = 0; i < 12; i++) {
  const a = i * Math.PI / 6, cx = 261 + 15 * Math.sin(a), cy = 26.5 - 15 * Math.cos(a);
  let p = "";
  for (let j = 0; j < 10; j++) {
    const r = j % 2 ? 1.1 : 2.7, b = j * Math.PI / 5;
    p += `${(cx + r * Math.sin(b)).toFixed(2)},${(cy - r * Math.cos(b)).toFixed(2)} `;
  }
  stars += `<polygon points="${p}"/>`;
}
document.getElementById("stars").innerHTML = stars;
```
